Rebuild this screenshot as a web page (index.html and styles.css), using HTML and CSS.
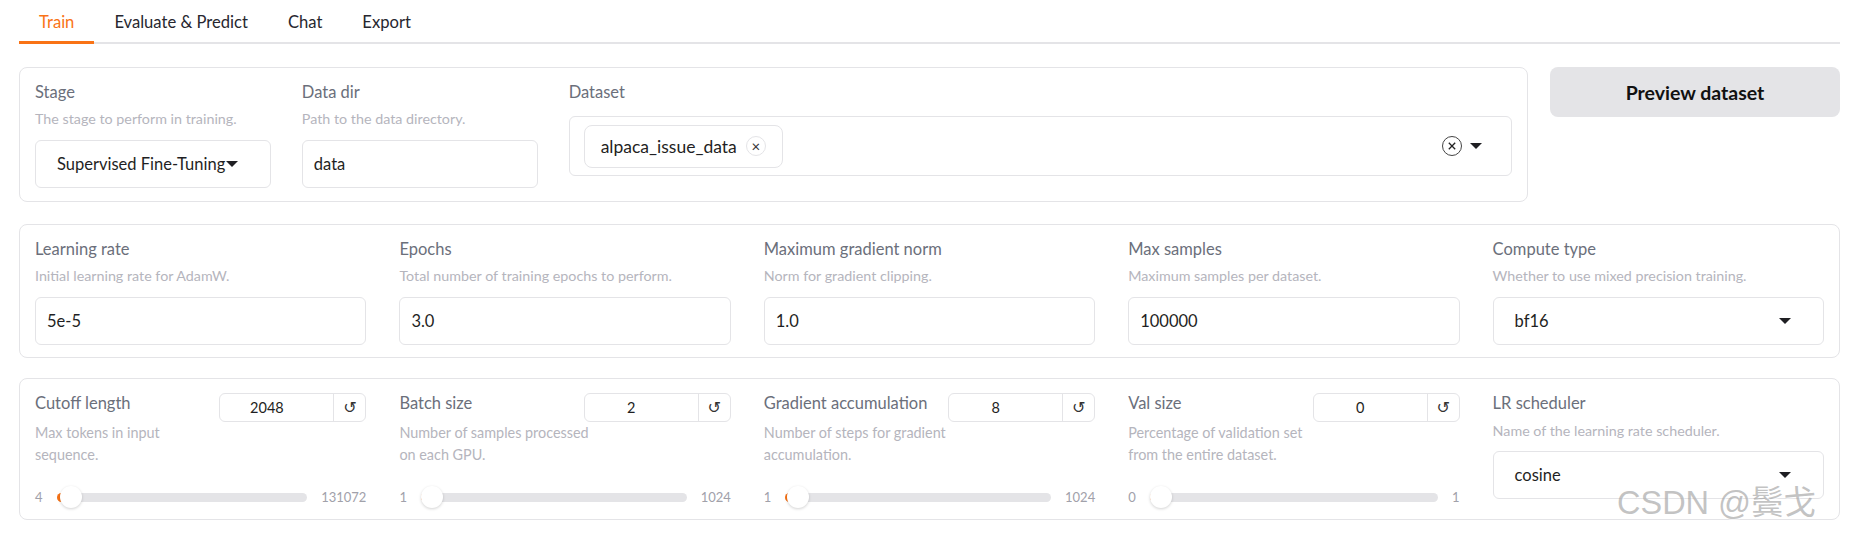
FILE: index.html
```html
<!DOCTYPE html>
<html lang="en">
<head>
    <meta charset="UTF-8">
    <meta name="viewport" content="width=device-width, initial-scale=1.0">
    <title>LLaMA Board - Train</title>
    <link rel="stylesheet" href="styles.css">
</head>
<body>
<div class="app">
    <div class="tabs">
        <button class="tab active">Train</button>
        <button class="tab">Evaluate &amp; Predict</button>
        <button class="tab">Chat</button>
        <button class="tab">Export</button>
    </div>

    <div class="row-top">
        <div class="block block-data">
            <div class="field">
                <div class="label">Stage</div>
                <div class="hint">The stage to perform in training.</div>
                <div class="input select"><span>Supervised Fine-Tuning</span><i class="caret"></i></div>
            </div>
            <div class="field">
                <div class="label">Data dir</div>
                <div class="hint">Path to the data directory.</div>
                <div class="input">data</div>
            </div>
            <div class="field">
                <div class="label label-tight">Dataset</div>
                <div class="multi">
                    <div class="chip">
                        <span>alpaca_issue_data</span>
                        <span class="chip-x">&times;</span>
                    </div>
                    <div class="multi-icons">
                        <svg class="clear" width="22" height="22" viewBox="0 0 22 22">
                            <circle cx="11" cy="11" r="9.5" fill="none" stroke="#444" stroke-width="1"/>
                            <path d="M7.8 7.8 L14.2 14.2 M14.2 7.8 L7.8 14.2" stroke="#222" stroke-width="1.3"/>
                        </svg>
                        <i class="caret"></i>
                    </div>
                </div>
            </div>
        </div>
        <button class="preview-btn">Preview dataset</button>
    </div>

    <div class="block grid5 block-params">
        <div class="field">
            <div class="label">Learning rate</div>
            <div class="hint">Initial learning rate for AdamW.</div>
            <div class="input">5e-5</div>
        </div>
        <div class="field">
            <div class="label">Epochs</div>
            <div class="hint">Total number of training epochs to perform.</div>
            <div class="input">3.0</div>
        </div>
        <div class="field">
            <div class="label">Maximum gradient norm</div>
            <div class="hint">Norm for gradient clipping.</div>
            <div class="input">1.0</div>
        </div>
        <div class="field">
            <div class="label">Max samples</div>
            <div class="hint">Maximum samples per dataset.</div>
            <div class="input">100000</div>
        </div>
        <div class="field">
            <div class="label">Compute type</div>
            <div class="hint">Whether to use mixed precision training.</div>
            <div class="input select"><span>bf16</span><i class="caret"></i></div>
        </div>
    </div>

    <div class="block grid5 block-sliders">
        <div class="field">
            <div class="head">
                <div class="label">Cutoff length</div>
                <div class="number"><span class="num-val">2048</span><span class="reset">&#8634;</span></div>
            </div>
            <div class="desc">Max tokens in input<br>sequence.</div>
            <div class="slider">
                <span class="s-min">4</span>
                <div class="track" style="--p: 0.0156"><div class="fill"></div><div class="thumb"></div></div>
                <span class="s-max">131072</span>
            </div>
        </div>
        <div class="field">
            <div class="head">
                <div class="label">Batch size</div>
                <div class="number"><span class="num-val">2</span><span class="reset">&#8634;</span></div>
            </div>
            <div class="desc">Number of samples processed<br>on each GPU.</div>
            <div class="slider">
                <span class="s-min">1</span>
                <div class="track" style="--p: 0.001"><div class="fill"></div><div class="thumb"></div></div>
                <span class="s-max">1024</span>
            </div>
        </div>
        <div class="field">
            <div class="head">
                <div class="label">Gradient accumulation</div>
                <div class="number"><span class="num-val">8</span><span class="reset">&#8634;</span></div>
            </div>
            <div class="desc">Number of steps for gradient<br>accumulation.</div>
            <div class="slider">
                <span class="s-min">1</span>
                <div class="track" style="--p: 0.0068"><div class="fill"></div><div class="thumb"></div></div>
                <span class="s-max">1024</span>
            </div>
        </div>
        <div class="field">
            <div class="head">
                <div class="label">Val size</div>
                <div class="number"><span class="num-val">0</span><span class="reset">&#8634;</span></div>
            </div>
            <div class="desc">Percentage of validation set<br>from the entire dataset.</div>
            <div class="slider">
                <span class="s-min">0</span>
                <div class="track" style="--p: 0"><div class="fill"></div><div class="thumb"></div></div>
                <span class="s-max">1</span>
            </div>
        </div>
        <div class="field">
            <div class="label">LR scheduler</div>
            <div class="hint hint-lr">Name of the learning rate scheduler.</div>
            <div class="input select"><span>cosine</span><i class="caret"></i></div>
        </div>
    </div>

    <div class="watermark">CSDN @鬓戈</div>
</div>
</body>
</html>
```

FILE: styles.css
```css
* {
    box-sizing: border-box;
}
body {
    margin: 0;
    font-family: Lato, "Noto Sans", sans-serif;
    background: #fff;
    color: #1f1f23;
}
.app {
    position: relative;
    padding: 0 15px 0 19px;
    height: 540px;
    overflow: hidden;
}

/* tabs */
.tabs {
    display: flex;
    border-bottom: 2px solid #e4e4e7;
}
.tab {
    font-family: inherit;
    font-size: 16.6px;
    line-height: 20px;
    color: #27272f;
    background: none;
    border: none;
    border-bottom: 3px solid transparent;
    margin-bottom: -2px;
    padding: 12px 20px 9px;
}
.tab.active {
    color: #f97316;
    border-bottom-color: #f97316;
}

/* blocks */
.row-top {
    display: flex;
    align-items: flex-start;
    gap: 22px;
    margin-top: 23px;
}
.block {
    background: #fff;
    border: 1px solid #e4e4e7;
    border-radius: 8px;
    padding: 14px 15px 13px;
}
.block-data {
    flex: 1;
    display: grid;
    grid-template-columns: 1fr 1fr 4fr;
    gap: 31px;
}
.grid5 {
    display: grid;
    grid-template-columns: repeat(5, 1fr);
    gap: 33px;
}
.block-params {
    margin-top: 22px;
    padding-bottom: 12px;
}
.block-sliders {
    margin-top: 20px;
    padding-bottom: 11px;
}
.field {
    min-width: 0;
}
.label {
    font-size: 16.5px;
    line-height: 20px;
    color: #6b6f7b;
    margin-bottom: 7px;
}
.label-tight {
    margin-bottom: 14px;
}
.hint {
    font-size: 14.3px;
    line-height: 20px;
    color: #b5b5bd;
    margin-bottom: 11px;
    white-space: nowrap;
}
.input {
    height: 48px;
    border: 1px solid #e4e4e7;
    border-radius: 6px;
    padding: 0 11px;
    display: flex;
    align-items: center;
    font-size: 16.5px;
    color: #1f1f23;
}
.select {
    justify-content: space-between;
    padding: 0 32px 0 21px;
}
.caret {
    display: inline-block;
    flex: none;
    width: 0;
    height: 0;
    border-left: 6px solid transparent;
    border-right: 6px solid transparent;
    border-top: 6px solid #1f1f23;
}

/* dataset multiselect */
.multi {
    min-height: 60px;
    border: 1px solid #e4e4e7;
    border-radius: 6px;
    padding: 7px 29px 7px 14px;
    display: flex;
    align-items: center;
    justify-content: space-between;
}
.chip {
    height: 43px;
    border: 1px solid #e4e4e7;
    border-radius: 8px;
    padding: 0 16px 0 16px;
    display: flex;
    align-items: center;
    gap: 9px;
    font-size: 17.5px;
}
.chip-x {
    width: 20px;
    height: 20px;
    border: 1px solid #e4e4e7;
    border-radius: 50%;
    display: flex;
    align-items: center;
    justify-content: center;
    font-size: 15px;
    line-height: 1;
    color: #333;
}
.multi-icons {
    display: flex;
    align-items: center;
    gap: 7px;
}

.preview-btn {
    flex: none;
    width: 290px;
    height: 50px;
    background: #e4e4e7;
    border: none;
    border-radius: 8px;
    font-family: inherit;
    font-size: 19.5px;
    font-weight: 700;
    color: #111;
}

/* sliders */
.head {
    display: flex;
    justify-content: space-between;
    align-items: flex-start;
}
.head .label {
    margin: 0;
}
.number {
    width: 147px;
    height: 29px;
    border: 1px solid #e4e4e7;
    border-radius: 6px;
    display: flex;
    flex: none;
}
.num-val {
    flex: 1;
    text-align: center;
    padding-right: 20px;
    font-size: 14.5px;
    line-height: 27px;
    color: #1f1f23;
}
.reset {
    width: 32px;
    border-left: 1px solid #e4e4e7;
    text-align: center;
    font-family: "DejaVu Sans", sans-serif;
    font-size: 16px;
    line-height: 27px;
    color: #333;
}
.desc {
    font-size: 14.4px;
    line-height: 22px;
    color: #b5b5bd;
}
.slider {
    display: flex;
    align-items: center;
    gap: 14px;
    height: 22px;
    margin-top: 20px;
    font-size: 13px;
    color: #a1a1aa;
}
.track {
    position: relative;
    flex: 1;
    height: 9px;
    border-radius: 5px;
    background: #e4e4e7;
}
.fill {
    height: 100%;
    width: calc(var(--p) * (100% - 22px) + 11px);
    background: #f97316;
    border-radius: 5px 0 0 5px;
}
.thumb {
    position: absolute;
    top: 50%;
    left: calc(var(--p) * (100% - 22px));
    width: 22px;
    height: 22px;
    margin-top: -11px;
    border-radius: 50%;
    background: #fff;
    box-shadow: 0 1px 3px rgba(0, 0, 0, 0.18);
}
.hint-lr {
    line-height: 22px;
    margin-top: 1px;
    margin-bottom: 9px;
}

.watermark {
    position: absolute;
    left: 1617px;
    top: 483px;
    font-family: "Liberation Sans", "Noto Sans CJK SC", sans-serif;
    font-size: 32.5px;
    line-height: 40px;
    color: rgba(135, 135, 135, 0.5);
    text-shadow: 1px 1px 0 rgba(255, 255, 255, 0.6);
    white-space: nowrap;
}
```
